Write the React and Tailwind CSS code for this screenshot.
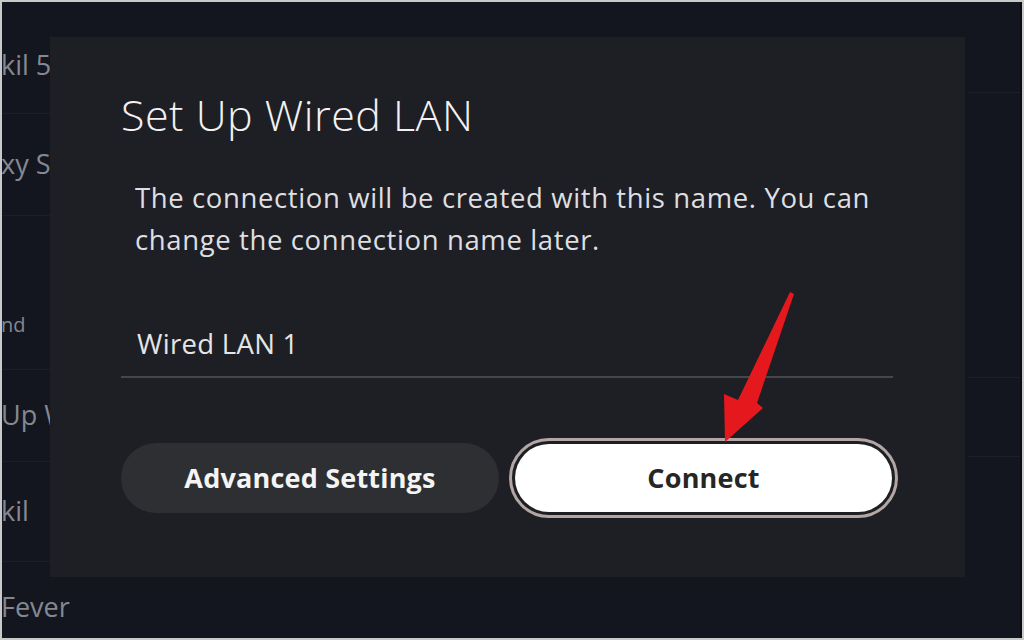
import React from "react";

const rows = [
  { h: "h-[96px]", text: "kil 5G", cls: "text-[27px]" },
  { h: "h-[102px]", text: "xy S", cls: "text-[27px]" },
  { h: "h-[154px]", text: "nd", cls: "text-[20px] pt-[94px]", top: true },
  { h: "h-[92px]", text: "Up W", cls: "text-[27px]" },
  { h: "h-[100px]", text: "kil", cls: "text-[27px]" },
  { h: "h-[90px]", text: "Fever", cls: "text-[27px]" },
];

function RedArrow() {
  return (
    <svg
      className="pointer-events-none absolute left-[700px] top-[284px]"
      width="100"
      height="162"
      viewBox="0 0 100 162"
    >
      <path
        d="M88 6 L92 8 L55 117 L61 122 L23 156 L22 108 L36 114 Z"
        fill="#e5181e"
      />
    </svg>
  );
}

export default function App() {
  return (
    <div
      className="relative h-[640px] w-[1024px] overflow-hidden border-2 border-[#c9c9c9] bg-[#13161f]"
      style={{ fontFamily: '"Open Sans", "Noto Sans", sans-serif' }}
    >
      {/* background list behind the dialog */}
      <div className="flex h-full">
        <div className="flex w-[60px] flex-col pt-[16px]">
          {rows.map((row, i) => (
            <div
              key={i}
              className={`${row.h} flex shrink-0 ${row.top ? "items-start" : "items-center"} border-b border-[#1c1f28] last:border-b-0 whitespace-nowrap text-[#858891] ${row.cls}`}
            >
              <span className="-ml-[1px]">{row.text}</span>
            </div>
          ))}
        </div>
        <div className="flex-1" />
        <div className="flex w-[54px] flex-col border-r-2 border-[#0b0c11]">
          <div className="h-[91px] border-b border-[#1d2029]" />
          <div className="h-[285px] border-b border-[#1d2029]" />
          <div className="h-[79px] border-b border-[#1d2029]" />
        </div>
      </div>

      {/* dialog */}
      <div className="absolute left-[48px] top-[35px] flex h-[540px] w-[915px] flex-col bg-[#1e1f24] px-[71px] pt-[53px]">
        <h1 className="text-[43px] font-light leading-[50px] tracking-[0.5px] text-[#f2f2f2]">
          Set Up Wired LAN
        </h1>
        <p className="mt-[37px] pl-[14px] pr-[0px] text-[27.5px] leading-[42px] tracking-[0.62px] text-[#dedfe2]">
          The connection will be created with this name. You can change the
          connection name later.
        </p>
        <div className="mt-[63px] w-[772px] border-b-2 border-[#45464b] pb-[12px] pl-[16px] text-[27.5px] leading-[40px] tracking-[0.3px] text-[#e4e5e7]">
          Wired LAN 1
        </div>
        <div className="mt-[60px] flex w-[780px] items-center gap-[10px]">
          <button className="flex h-[70px] w-[378px] items-center justify-center rounded-full bg-[#2e2f33] text-[27px] font-bold tracking-[0.2px] text-[#f4f4f4]">
            Advanced Settings
          </button>
          <div className="rounded-full border-[3px] border-[#b4a7a3] p-[3px]">
            <button className="flex h-[68px] w-[377px] items-center justify-center rounded-full bg-white text-[27px] font-bold tracking-[0.2px] text-[#262626]">
              Connect
            </button>
          </div>
        </div>
      </div>

      <RedArrow />
    </div>
  );
}
